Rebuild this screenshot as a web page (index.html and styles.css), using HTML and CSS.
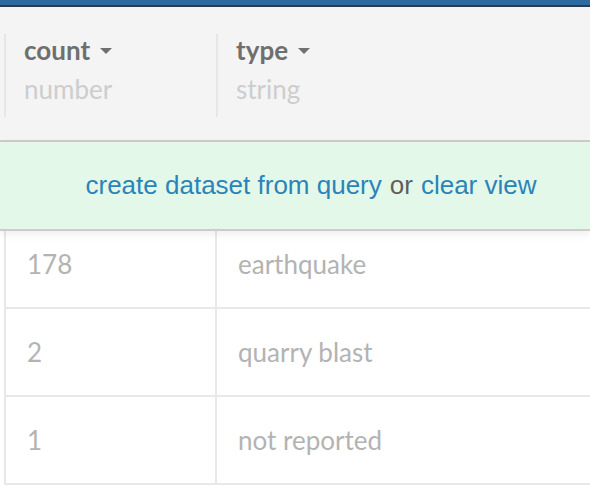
FILE: index.html
```html
<!DOCTYPE html>
<html>
<head>
<meta charset="utf-8">
<link rel="stylesheet" href="styles.css">
</head>
<body>
<div class="topbar"></div>
<div class="header">
  <div class="col col-count">
    <div class="col-name">count <span class="caret"></span></div>
    <div class="col-type">number</div>
  </div>
  <div class="col col-kind">
    <div class="col-name">type <span class="caret"></span></div>
    <div class="col-type">string</div>
  </div>
</div>
<div class="banner">
  <a class="link">create dataset from query</a> <span class="or">or</span> <a class="link">clear view</a>
</div>
<div class="rows">
  <div class="row first">
    <div class="cell c1">178</div>
    <div class="cell c2">earthquake</div>
  </div>
  <div class="row">
    <div class="cell c1">2</div>
    <div class="cell c2">quarry blast</div>
  </div>
  <div class="row">
    <div class="cell c1">1</div>
    <div class="cell c2">not reported</div>
  </div>
</div>
</body>
</html>
```
FILE: styles.css
```css
html, body {
  margin: 0;
  padding: 0;
  background: #ffffff;
  font-family: Lato, "Open Sans", sans-serif;
  overflow: hidden;
}
.topbar {
  height: 5px;
  background: #2d6a9f;
  border-bottom: 2px solid #2b3b4c;
}
.header {
  background: #f4f4f4;
  border-bottom: 2px solid #cccccc;
  display: flex;
  padding-top: 27px;
  box-sizing: border-box;
  height: 135px;
}
.col {
  border-left: 2px solid #e6e6e6;
  height: 83px;
  box-sizing: border-box;
  padding-left: 18px;
}
.col-count {
  margin-left: 4px;
  width: 212px;
}
.col-kind {
  width: 300px;
}
.col-name {
  font-weight: 700;
  font-size: 26px;
  color: #6f6f6f;
  line-height: 32px;
  display: flex;
  align-items: center;
}
.caret {
  display: inline-block;
  width: 0;
  height: 0;
  border-left: 6px solid transparent;
  border-right: 6px solid transparent;
  border-top: 6px solid #707070;
  margin-left: 10px;
  margin-top: 2px;
}
.col-type {
  font-size: 26px;
  color: #cdcdcd;
  line-height: 32px;
  margin-top: 7px;
}
.banner {
  position: relative;
  z-index: 2;
  height: 87px;
  background: #e4f8ea;
  border-bottom: 2px solid #cccccc;
  box-shadow: 0 3px 8px rgba(0, 0, 0, 0.07);
  display: flex;
  align-items: center;
  justify-content: center;
  padding-left: 32px;
  font-family: "Liberation Sans", Arial, sans-serif;
  font-size: 26px;
}
.link {
  color: #2a84b8;
  text-decoration: none;
  white-space: pre;
}
.or {
  color: #5f5f5f;
  margin: 0 8px;
}
.rows {
  margin-left: 4px;
  border-left: 2px solid #e8e8e8;
}
.row {
  display: grid;
  grid-template-columns: 209px 1fr;
  height: 88px;
  border-bottom: 2px solid #e8e8e8;
  box-sizing: border-box;
}
.row.first {
  height: 78px;
}
.cell {
  display: flex;
  align-items: center;
  padding-left: 21px;
  font-size: 26px;
  color: #b3b3b3;
}
.row.first .cell {
  padding-bottom: 10px;
}
.c2 {
  border-left: 2px solid #e8e8e8;
}
```
